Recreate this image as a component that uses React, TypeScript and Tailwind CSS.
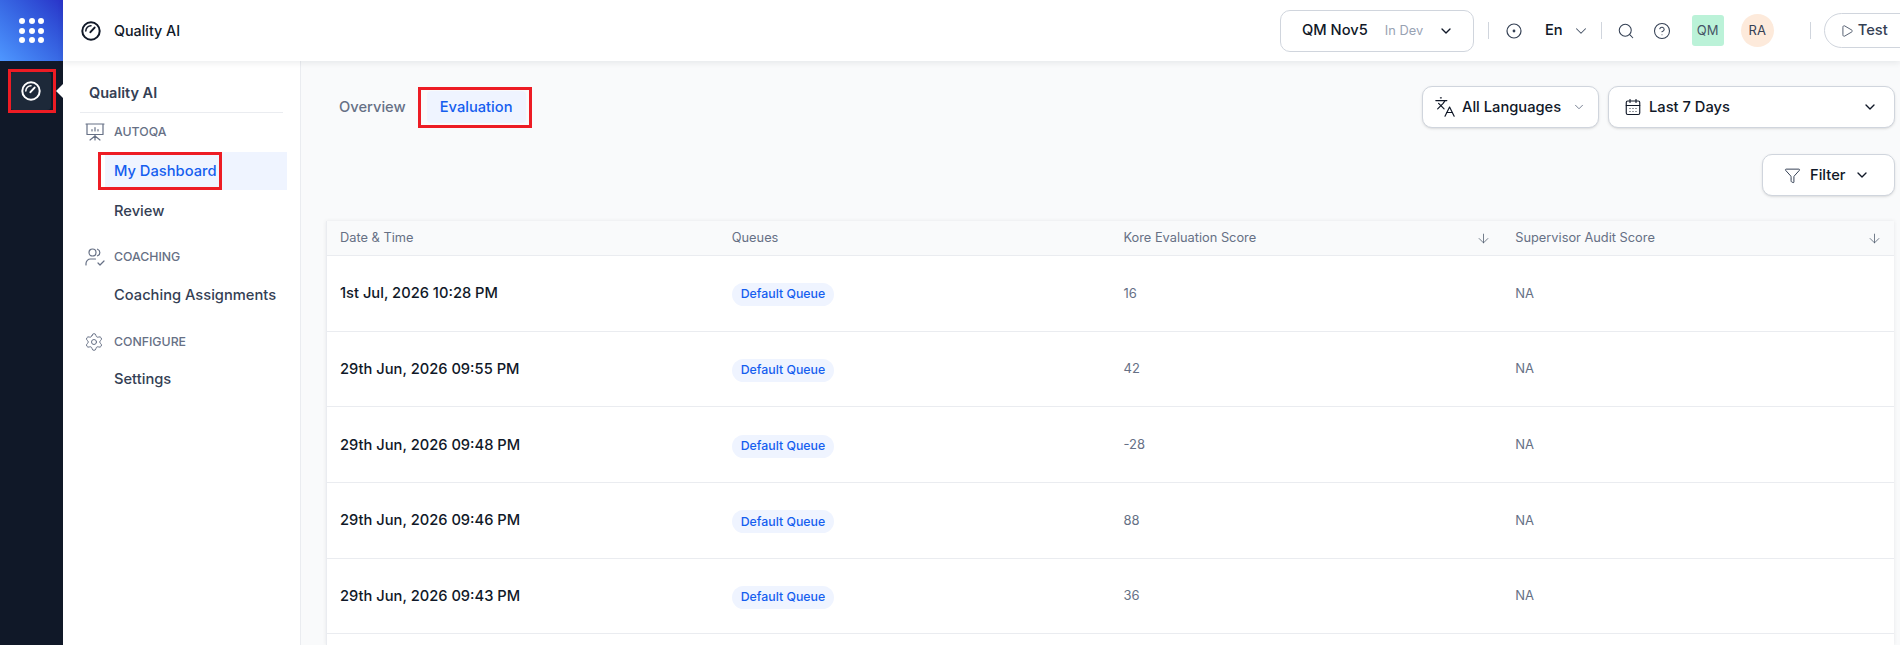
import { ArrowDown, CalendarDays, ChevronDown, CircleHelp, Funnel, Languages, Play, Search, Settings } from "lucide-react";

const rows = [
  { date: "1st Jul, 2026 10:28 PM", score: "16" },
  { date: "29th Jun, 2026 09:55 PM", score: "42" },
  { date: "29th Jun, 2026 09:48 PM", score: "-28" },
  { date: "29th Jun, 2026 09:46 PM", score: "88" },
  { date: "29th Jun, 2026 09:43 PM", score: "36" },
];

function GaugeIcon({ className }: { className?: string }) {
  return (
    <svg viewBox="0 0 20 20" fill="none" stroke="currentColor" strokeLinecap="round" className={className}>
      <circle cx="10" cy="10" r="8.7" strokeWidth="2" />
      <path d="M4.8 10a5.2 5.2 0 0 1 5.2-5.2" strokeWidth="1.5" />
      <path d="M9.4 11.2 13.6 6.6" strokeWidth="2" />
    </svg>
  );
}

function BoardIcon() {
  return (
    <svg viewBox="0 0 20 18" fill="none" stroke="currentColor" strokeWidth="1.2" strokeLinecap="round" strokeLinejoin="round" className="h-[18px] w-5 text-[#667085]">
      <path d="M1 1h18M2 1v10.5h16V1" />
      <path d="M7 8V6.5M10 8V4.5M13 8V6.5" />
      <path d="M10 11.5V13M10 13l-5 4M10 13l5 4M10 13v4" />
    </svg>
  );
}

function CoachIcon() {
  return (
    <svg viewBox="0 0 20 18" fill="none" stroke="currentColor" strokeWidth="1.2" strokeLinecap="round" strokeLinejoin="round" className="h-[18px] w-5 text-[#667085]">
      <circle cx="7.5" cy="4.5" r="3.5" />
      <path d="M12.5 1.2a3.5 3.5 0 0 1 0 6.6" />
      <path d="M1 17v-1.5A4.5 4.5 0 0 1 5.5 11h5" />
      <path d="m13 15 2 2 4-4" />
    </svg>
  );
}

function RedMark({ className }: { className: string }) {
  return <div className={`pointer-events-none absolute z-10 border-[3px] border-[#ed1c24] ${className}`} />;
}

function SectionLabel({ icon, label }: { icon: React.ReactNode; label: string }) {
  return (
    <div className="flex h-[26px] items-center pl-[22px]">
      <span className="flex w-[29px] items-center">{icon}</span>
      <span className="text-[12.3px] font-[450] uppercase text-[#667085]">{label}</span>
    </div>
  );
}

function SideItem({ label, active }: { label: string; active?: boolean }) {
  return (
    <div className={`relative ml-[42px] mr-[13px] flex h-[38px] items-center pl-[9px] text-[14.7px] font-[450] ${active ? "bg-[#eff4ff] text-[#155eef]" : "text-[#344054]"}`}>
      {label}
      {active && <RedMark className="-left-[7px] inset-y-0 w-[124px]" />}
    </div>
  );
}

export default function App() {
  return (
    <div className="flex h-screen w-full overflow-hidden bg-white font-['Inter',sans-serif]">
      <aside className="flex w-[63px] shrink-0 flex-col bg-[#101828]">
        <div className="flex h-[61px] items-center justify-center bg-gradient-to-tr from-[#4f97ff] to-[#2a32c8]">
          <div className="grid grid-cols-3 gap-x-[3.5px] gap-y-[3.5px]">
            {Array.from({ length: 9 }).map((_, i) => (
              <span key={i} className="h-[6px] w-[6px] rounded-full bg-white" />
            ))}
          </div>
        </div>
        <div className="relative ml-[10px] mt-[11px] flex h-[38px] w-[41px] items-center justify-center rounded-[4px] bg-[#1d2939] text-white">
          <GaugeIcon className="h-5 w-5" />
          <RedMark className="-left-[2px] -right-[5px] -top-[3px] -bottom-[3px]" />
          <span className="absolute -right-[12px] top-[12px] h-0 w-0 border-y-[7px] border-r-[7px] border-y-transparent border-r-white" />
        </div>
      </aside>

      <div className="flex min-w-0 flex-1 flex-col">
        <header className="relative z-20 flex h-[61px] shrink-0 items-center bg-white shadow-[0_2px_6px_rgba(16,24,40,0.08)]">
          <div className="flex flex-1 items-center pl-[18px] text-[14.3px] font-[450] text-[#101828]">
            <GaugeIcon className="mr-[13px] h-5 w-5" />
            Quality AI
          </div>
          <div className="flex w-[620px] shrink-0 items-center overflow-hidden">
            <div className="flex h-[42px] w-[194px] shrink-0 items-center rounded-[10px] border border-[#d0d5dd] pl-[21px]">
              <span className="text-[14.7px] font-[450] text-[#101828]">QM Nov5</span>
              <span className="ml-[17px] text-[12.8px] text-[#98a2b3]">In Dev</span>
              <ChevronDown className="ml-[15px] h-4 w-4 text-[#101828]" strokeWidth={2} />
            </div>
            <span className="ml-[14px] h-[17px] w-px shrink-0 bg-[#d0d5dd]" />
            <svg viewBox="0 0 16 16" fill="none" className="ml-[17px] h-4 w-4 shrink-0 text-[#344054]">
              <circle cx="8" cy="8" r="7" stroke="currentColor" strokeWidth="1.2" />
              <circle cx="8" cy="8" r="1.4" fill="currentColor" />
            </svg>
            <span className="ml-[23px] text-[14.7px] font-[450] text-[#101828]">En</span>
            <ChevronDown className="ml-[9px] h-[18px] w-[18px] shrink-0 text-[#475467]" strokeWidth={1.4} />
            <span className="ml-[11px] h-[17px] w-px shrink-0 bg-[#d0d5dd]" />
            <Search className="ml-[15px] h-[18px] w-[18px] shrink-0 text-[#344054]" strokeWidth={1.4} />
            <CircleHelp className="ml-[18px] h-[18px] w-[18px] shrink-0 text-[#344054]" strokeWidth={1.4} />
            <span className="ml-[21px] flex h-[31px] w-[32px] shrink-0 items-center justify-center rounded-[3px] bg-[#bbf2d8] text-[13px] text-[#475467]">QM</span>
            <span className="ml-[17px] flex h-[33px] w-[33px] shrink-0 items-center justify-center rounded-full bg-[#fdeadb] text-[13px] text-[#344054]">RA</span>
            <span className="ml-[36px] h-[17px] w-px shrink-0 bg-[#d0d5dd]" />
            <div className="ml-[13px] flex h-[35px] w-[110px] shrink-0 items-center rounded-full border border-[#d0d5dd] pl-[15px] text-[14.7px] font-[450] text-[#344054]">
              <Play className="mr-[4px] h-[14px] w-[14px] shrink-0" strokeWidth={1.4} />
              Test
            </div>
          </div>
        </header>

        <div className="flex min-h-0 flex-1">
          <nav className="w-[238px] shrink-0 border-r border-[#eaecf0] bg-white">
            <div className="mx-[17px] mt-[12px] flex h-[40px] items-center border-b border-[#eaecf0] pl-[9px] text-[14.5px] font-semibold text-[#344054]">
              Quality AI
            </div>
            <div className="mt-[6px]">
              <SectionLabel icon={<BoardIcon />} label="AutoQA" />
              <div className="mt-[7px] space-y-[2px]">
                <SideItem label="My Dashboard" active />
                <SideItem label="Review" />
              </div>
            </div>
            <div className="mt-[14px]">
              <SectionLabel icon={<CoachIcon />} label="Coaching" />
              <div className="mt-[6px]">
                <SideItem label="Coaching Assignments" />
              </div>
            </div>
            <div className="mt-[15px]">
              <SectionLabel icon={<Settings className="-ml-px h-[20px] w-[20px] text-[#667085]" strokeWidth={1.2} />} label="Configure" />
              <div className="mt-[5px]">
                <SideItem label="Settings" />
              </div>
            </div>
          </nav>

          <main className="flex min-w-0 flex-1 flex-col bg-[#f9fafb] pl-[25px] pr-[5px] pt-[25px]">
            <div className="flex h-[42px] items-start justify-between">
              <div className="mt-[5px] flex items-center gap-2 text-[14.7px] font-[450]">
                <span className="flex h-[32px] items-center pl-[13px] pr-[13px] text-[#667085]">Overview</span>
                <span className="relative flex h-[32px] items-center rounded-[4px] bg-[#eff4ff] px-[13px] text-[#155eef]">
                  Evaluation
                  <RedMark className="-left-[9px] -right-[6px] -top-[4px] -bottom-[5px]" />
                </span>
              </div>
              <div className="flex gap-[9px]">
                <div className="flex h-[42px] w-[177px] items-center rounded-[10px] border border-[#d0d5dd] bg-white pl-[11px] shadow-sm">
                  <Languages className="mr-[6px] h-[22px] w-[22px] text-[#101828]" strokeWidth={1.3} />
                  <span className="text-[14.7px] font-[450] text-[#101828]">All Languages</span>
                  <ChevronDown className="ml-[11px] h-[14px] w-[14px] text-[#667085]" strokeWidth={1.5} />
                </div>
                <div className="flex h-[42px] w-[287px] items-center justify-between rounded-[10px] border border-[#d0d5dd] bg-white pl-[15px] pr-[16px] shadow-sm">
                  <span className="flex items-center text-[14.7px] font-[450] text-[#101828]">
                    <CalendarDays className="mr-[7px] h-[18px] w-[18px] text-[#101828]" strokeWidth={1.5} />
                    Last 7 Days
                  </span>
                  <ChevronDown className="h-4 w-4 text-[#101828]" strokeWidth={2} />
                </div>
              </div>
            </div>

            <div className="mt-[26px] flex justify-end">
              <div className="flex h-[42px] w-[133px] items-center rounded-[10px] border border-[#d0d5dd] bg-white pl-[21px] shadow-sm">
                <Funnel className="mr-[9px] h-[17px] w-[17px] text-[#344054]" strokeWidth={1.4} />
                <span className="text-[14.7px] font-[450] text-[#101828]">Filter</span>
                <ChevronDown className="ml-[9px] h-4 w-4 text-[#101828]" strokeWidth={2} />
              </div>
            </div>

            <div className="mr-px mt-[25px] flex-1 border-l border-[#eaecf0] bg-white shadow-[0_0_4px_rgba(16,24,40,0.08)]">
              <div className="grid h-[35px] grid-cols-4 items-center border-b border-[#eaecf0] bg-[#f9fafb] text-[12.8px] text-[#667085]">
                <div className="px-[13px]">Date &amp; Time</div>
                <div className="px-[13px]">Queues</div>
                <div className="flex items-center justify-between pl-[13px] pr-[11px]">
                  Kore Evaluation Score
                  <ArrowDown className="h-[15px] w-[15px] text-[#475467]" strokeWidth={1.2} />
                </div>
                <div className="flex items-center justify-between pl-[13px] pr-[12px]">
                  Supervisor Audit Score
                  <ArrowDown className="h-[15px] w-[15px] text-[#475467]" strokeWidth={1.2} />
                </div>
              </div>
              {rows.map((row) => (
                <div key={row.date} className="grid h-[75.7px] grid-cols-4 items-center border-b border-[#eaecf0]">
                  <div className="px-[13px] text-[14.7px] font-[450] text-[#101828]">{row.date}</div>
                  <div className="px-[13px]">
                    <span className="inline-flex h-[23px] items-center rounded-full bg-[#eff4ff] px-[9px] text-[12.3px] font-[450] text-[#155eef]">Default Queue</span>
                  </div>
                  <div className="px-[13px] text-[13px] text-[#667085]">{row.score}</div>
                  <div className="px-[13px] text-[13px] text-[#667085]">NA</div>
                </div>
              ))}
            </div>
          </main>
        </div>
      </div>
    </div>
  );
}
